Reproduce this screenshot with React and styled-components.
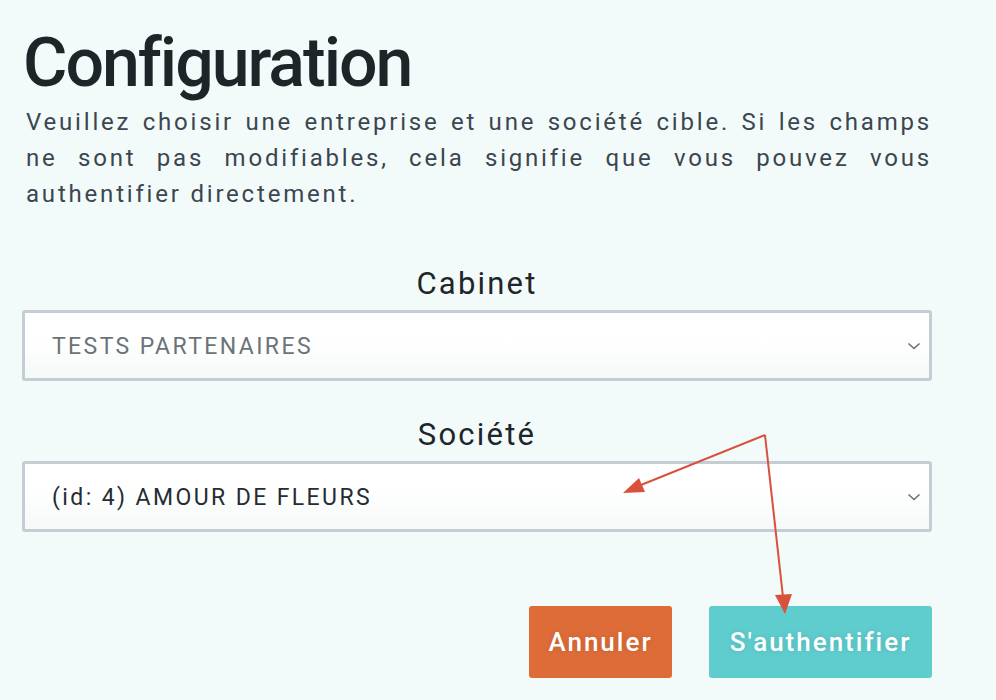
import styled, { createGlobalStyle } from 'styled-components';

const GlobalStyle = createGlobalStyle`
  html, body {
    margin: 0;
    padding: 0;
    background: #f2fbfa;
  }
  * { box-sizing: border-box; }
`;

const Page = styled.div`
  position: relative;
  width: 996px;
  height: 700px;
  overflow: hidden;
  background: #f2fbfa;
  font-family: Roboto, "Liberation Sans", sans-serif;
`;

const Content = styled.div`
  width: 910px;
  margin-left: 22px;
  padding-top: 22px;
  display: flex;
  flex-direction: column;
`;

const Title = styled.h1`
  margin: 0 0 0 1px;
  font-size: 68px;
  font-weight: 500;
  line-height: 82px;
  color: #1f2428;
  letter-spacing: -2px;
`;

const Intro = styled.p`
  margin: 0 0 0 4px;
  font-size: 24px;
  line-height: 36px;
  letter-spacing: 2.8px;
  color: #3b4650;
  text-align: justify;
`;

const Field = styled.div`
  display: flex;
  flex-direction: column;
  margin-top: ${(p) => p.$top}px;
`;

const Label = styled.div`
  text-align: center;
  font-size: 31px;
  font-weight: 400;
  line-height: 36px;
  color: #202529;
  letter-spacing: 2.2px;
  margin-bottom: 8px;
`;

const Select = styled.div`
  height: 71px;
  border: 3px solid #c5cdd4;
  border-radius: 3px;
  background: linear-gradient(#ffffff 40%, #f6f9f9);
  display: flex;
  align-items: center;
  justify-content: space-between;
  padding: 0 8px 0 27px;
`;

const Value = styled.span`
  font-size: 23px;
  letter-spacing: 2.4px;
  color: ${(p) => (p.$muted ? '#6a7377' : '#262c31')};
  padding-top: 2px;
`;

const Chevron = () => (
  <svg width="14" height="10" viewBox="0 0 14 10" fill="none">
    <path d="M1.5 2.5 L7 7.5 L12.5 2.5" stroke="#6b7175" strokeWidth="1.6" />
  </svg>
);

const Actions = styled.div`
  display: flex;
  justify-content: flex-end;
  gap: 37px;
  margin-top: 74px;
`;

const Button = styled.button`
  height: 72px;
  width: ${(p) => p.$w}px;
  border: none;
  border-radius: 3px;
  background: ${(p) => p.$bg};
  color: #ffffff;
  font-family: Roboto, "Liberation Sans", sans-serif;
  font-size: 26px;
  font-weight: 500;
  letter-spacing: 2px;
  text-shadow: 0 0 6px rgba(0, 0, 0, 0.12);
  cursor: pointer;
`;

const Annotation = styled.svg`
  position: absolute;
  left: 0;
  top: 0;
  pointer-events: none;
`;

const App = () => {
  return (
    <Page>
      <GlobalStyle />
      <Content>
        <Title>Configuration</Title>
        <Intro>
          Veuillez choisir une entreprise et une société cible. Si les champs ne sont pas
          modifiables, cela signifie que vous pouvez vous authentifier directement.
        </Intro>
        <Field $top={54}>
          <Label>Cabinet</Label>
          <Select>
            <Value $muted>TESTS PARTENAIRES</Value>
            <Chevron />
          </Select>
        </Field>
        <Field $top={36}>
          <Label>Société</Label>
          <Select>
            <Value>(id: 4) AMOUR DE FLEURS</Value>
            <Chevron />
          </Select>
        </Field>
        <Actions>
          <Button $w={143} $bg="#de6c38">Annuler</Button>
          <Button $w={223} $bg="#5fcdce">S'authentifier</Button>
        </Actions>
      </Content>
      <Annotation width="996" height="700" viewBox="0 0 996 700">
        <g stroke="#d9503c" strokeWidth="2" fill="none">
          <line x1="765" y1="435" x2="636" y2="487" />
          <line x1="765" y1="435" x2="783" y2="597" />
        </g>
        <g fill="#d9503c">
          <polygon points="623,493 639,478 645,492" />
          <polygon points="785,614 775,595 792,594" />
        </g>
      </Annotation>
    </Page>
  );
};

export default App;
